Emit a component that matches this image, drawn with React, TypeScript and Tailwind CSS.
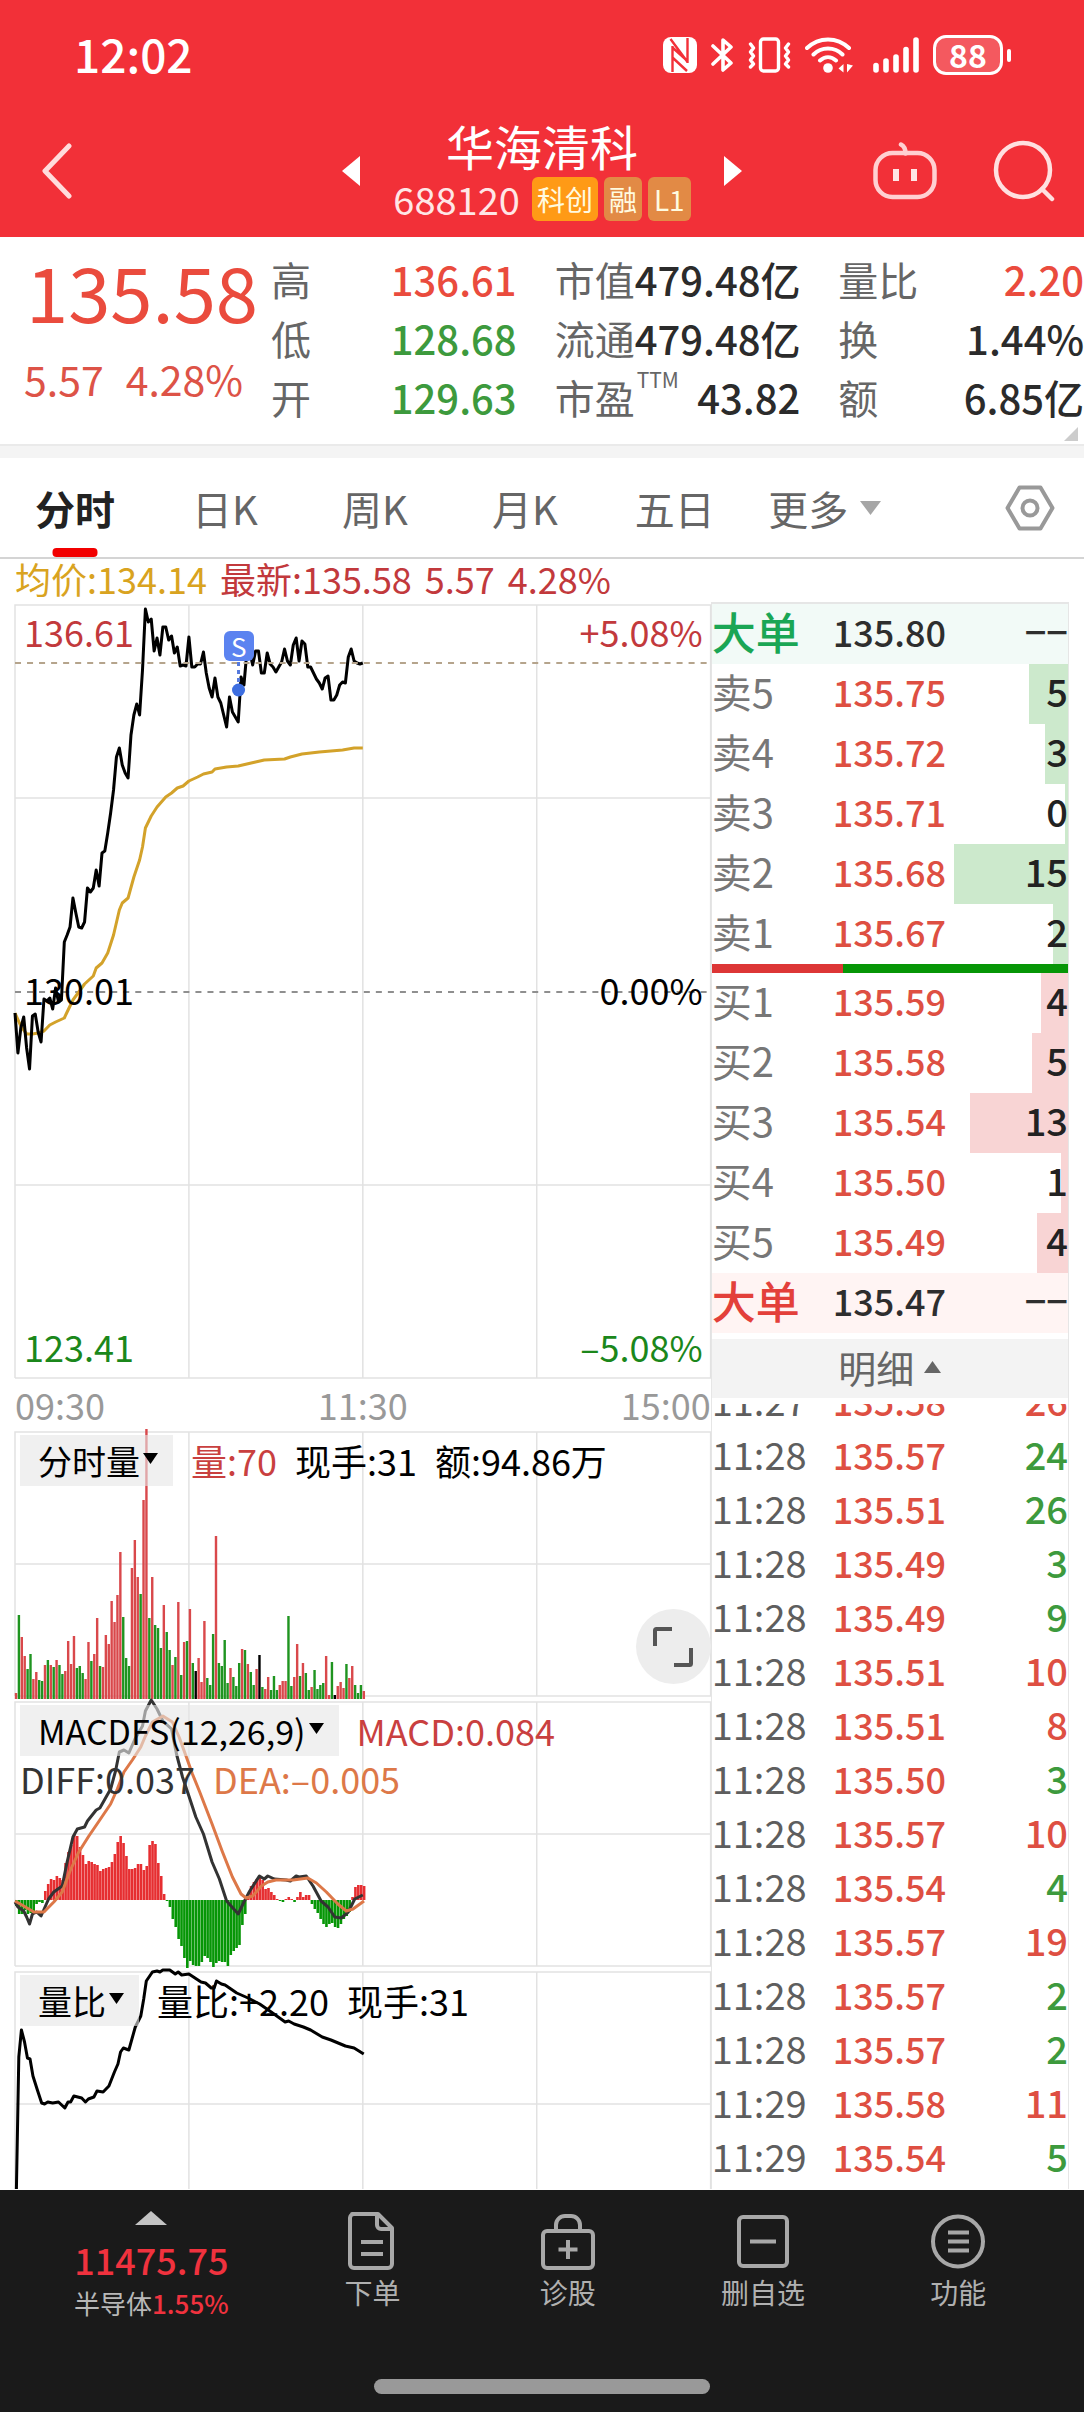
import React from 'react';

type Point = [number, number];

interface OrderRow {
  label: string;
  price: string;
  volume: string;
  depth: number;
}

interface Tick {
  time: string;
  price: string;
  volume: number;
  side: 'buy' | 'sell';
}

const CHART_WIDTH = 694;
const MINUTES = 240;
const STEP = CHART_WIDTH / MINUTES;

const priceSeries = [
  408, 448, 423, 412, 443, 464, 411, 409, 427, 437, 394, 396, 393, 404, 383, 397, 395, 337, 330, 322,
  293, 308, 322, 323, 317, 283, 287, 283, 265, 281, 248, 246, 228, 208, 185, 152, 143, 160, 168, 173,
  130, 110, 99, 110, 65, 4, 17, 14, 46, 33, 50, 22, 22, 35, 31, 48, 42, 61, 60, 61,
  32, 62, 62, 59, 59, 47, 68, 83, 92, 73, 92, 98, 110, 122, 92, 107, 112, 117, 72, 80,
  47, 47, 60, 46, 46, 68, 68, 48, 59, 62, 67, 62, 57, 44, 56, 60, 40, 33, 56, 36,
  39, 62, 62, 68, 74, 78, 84, 73, 71, 95, 95, 90, 80, 77, 78, 52, 44, 56, 58, 59, 58,
];

const averageSeries: Point[] = [
  [0, 408], [2, 421], [4, 429], [6, 429], [8, 428], [10, 426], [12, 420], [14, 417], [17, 413], [18, 407],
  [20, 395], [22, 387], [24, 379], [27, 371], [28, 363], [30, 358], [32, 348], [34, 330], [36, 305], [37, 298],
  [39, 293], [41, 272], [43, 255], [44, 242], [45, 223], [47, 211], [49, 202], [52, 192], [54, 188], [56, 183],
  [58, 181], [60, 176], [63, 172], [65, 169], [68, 167], [69, 164], [73, 162], [77, 161], [80, 159], [83, 157],
  [86, 155], [93, 154], [95, 152], [99, 149], [105, 147], [113, 145], [117, 143], [120, 143],
];

const volumeSeries =
  'r6 g84 r62 r43 g30 g45 r20 r27 g19 g18 r34 g39 r34 g32 r39 g34 g25 r28 r58 r35 r63 g31 g33 g26 r20 r57 g38 r45 r81 g33 ' +
  'r32 r64 r55 r98 r77 r104 r147 g82 g41 g33 r131 r159 r122 g105 r199 r270 g81 r122 g74 g71 g51 r94 g67 g49 r34 g42 r97 g24 r57 g58 ' +
  'r90 g36 k28 r41 r17 r78 g21 g14 g65 r163 g36 g33 g59 g16 r31 g22 g13 g36 r50 g49 r35 g27 g14 r30 k44 g12 r10 r22 g9 g23 ' +
  'g9 r14 r18 r18 g83 g13 r22 r55 g23 r36 g26 g9 r12 g29 g10 g14 g16 r43 r4 g37 k4 r13 r17 r11 g35 r21 r33 g14 g6 g14 r8';

const macdBars = [
  -6, -14, -14, -10, -14, -13, -11, -4, -2, -3, 9, 16, 21, 20, 24, 22, 20, 37, 48, 55,
  66, 64, 53, 45, 36, 39, 38, 36, 35, 29, 31, 32, 33, 38, 46, 58, 64, 57, 44, 31,
  31, 32, 36, 36, 30, 34, 55, 59, 56, 37, 24, 6, -1, -7, -19, -27, -39, -46, -58, -68,
  -61, -65, -66, -66, -62, -56, -58, -62, -67, -63, -61, -62, -62, -66, -55, -51, -48, -45, -25, -14,
  6, 14, 18, 21, 22, 20, 11, 12, 8, 5, 1, -1, -2, 1, 3, 1, -2, 3, 8, 3,
  5, 5, -4, -9, -13, -19, -24, -27, -24, -23, -27, -28, -24, -19, -16, -12, 3, 13, 15, 15, 14,
];

const diffSeries: Point[] = [
  [0, 200], [1, 205], [3, 209], [4, 215], [5, 222], [6, 212], [7.5, 210], [9, 214], [11.6, 197], [13.4, 190],
  [16.3, 184], [18, 160], [20, 135], [21.5, 127], [24, 125], [25, 119], [28, 108], [29.3, 106], [33, 87], [34.7, 69],
  [36, 50], [37.6, 48], [39.3, 51], [41.4, 37], [44, 24], [45, 9], [47, -2], [49, 7], [51, 19], [54, 27],
  [55.7, 52], [57.8, 75], [60, 94], [62.4, 115], [65, 132], [68, 160], [70.5, 177], [73, 199], [77, 212], [79, 200],
  [81, 189], [84.3, 174], [86, 177], [87.2, 174], [89.5, 177], [93.5, 178], [95, 179], [97, 174], [98, 175], [100.5, 174],
  [102.8, 184], [105.6, 199], [108, 205], [110.3, 215], [112.6, 216], [115, 210], [117.2, 197], [120, 193],
];

const deaSeries: Point[] = [
  [0, 199], [3, 204], [6.5, 210], [10, 210], [13.4, 200], [16.3, 190], [19, 169], [22, 150], [25.5, 134], [29, 119],
  [33, 102], [35.3, 87], [37.6, 70], [40.5, 58], [43.4, 45], [45, 34], [47.4, 20], [51, 14], [54.3, 20], [56.6, 35],
  [59, 54], [61.2, 72], [63.6, 89], [68, 122], [71.6, 150], [75, 175], [78, 192], [79.7, 196], [82, 194], [85, 184],
  [87.2, 180], [90, 178], [96, 178], [101, 176], [104, 181], [107.4, 190], [111.4, 202], [114.3, 209], [116.6, 207], [120.4, 199],
];

const ratioSeries: Point[] = [
  [0.5, 217], [1.3, 85], [2.2, 58], [3.3, 70], [4.3, 86], [5.2, 87], [6.2, 104], [7.6, 117], [9.2, 131], [10.2, 132],
  [11.3, 130], [13, 131], [15, 130], [17.2, 136], [18.3, 130], [19.2, 130], [20.3, 124], [23, 126], [24.3, 130], [25.3, 127],
  [27.2, 125], [28.3, 119], [30.4, 120], [32.4, 114], [34.3, 100], [35.5, 92], [36.4, 80], [37.4, 76], [39.3, 78], [41.5, 55],
  [43.4, 44], [44.4, 27], [45.3, 9], [47.4, 0], [49, -1], [50, 0], [51, -2], [53.4, -2], [55.3, 2], [56.3, 0],
  [57.5, 3], [60, 2], [64.2, 10], [65.7, 11], [67.7, 16], [68.7, 16], [69.5, 9], [71.2, 12], [72.5, 13], [76.5, 21],
  [80.4, 26], [84.4, 32], [88.4, 40], [93.2, 50], [94.4, 49], [96.3, 52], [99.5, 55], [102, 58], [106, 65], [109, 68],
  [114, 74], [117, 76], [120.3, 82],
];

const asks: OrderRow[] = [
  { label: '卖5', price: '135.75', volume: '5', depth: 11 },
  { label: '卖4', price: '135.72', volume: '3', depth: 6.5 },
  { label: '卖3', price: '135.71', volume: '0', depth: 0.9 },
  { label: '卖2', price: '135.68', volume: '15', depth: 32.1 },
  { label: '卖1', price: '135.67', volume: '2', depth: 4.2 },
];

const bids: OrderRow[] = [
  { label: '买1', price: '135.59', volume: '4', depth: 7.6 },
  { label: '买2', price: '135.58', volume: '5', depth: 10.1 },
  { label: '买3', price: '135.54', volume: '13', depth: 27.4 },
  { label: '买4', price: '135.50', volume: '1', depth: 2 },
  { label: '买5', price: '135.49', volume: '4', depth: 8.7 },
];

const ticks: Tick[] = [
  { time: '11:27', price: '135.58', volume: 26, side: 'buy' },
  { time: '11:28', price: '135.57', volume: 24, side: 'sell' },
  { time: '11:28', price: '135.51', volume: 26, side: 'sell' },
  { time: '11:28', price: '135.49', volume: 3, side: 'sell' },
  { time: '11:28', price: '135.49', volume: 9, side: 'sell' },
  { time: '11:28', price: '135.51', volume: 10, side: 'buy' },
  { time: '11:28', price: '135.51', volume: 8, side: 'buy' },
  { time: '11:28', price: '135.50', volume: 3, side: 'sell' },
  { time: '11:28', price: '135.57', volume: 10, side: 'buy' },
  { time: '11:28', price: '135.54', volume: 4, side: 'sell' },
  { time: '11:28', price: '135.57', volume: 19, side: 'buy' },
  { time: '11:28', price: '135.57', volume: 2, side: 'sell' },
  { time: '11:28', price: '135.57', volume: 2, side: 'sell' },
  { time: '11:29', price: '135.58', volume: 11, side: 'buy' },
  { time: '11:29', price: '135.54', volume: 5, side: 'sell' },
];

const toPoints = (series: Point[]) => series.map(([m, y]) => `${(m * STEP).toFixed(1)},${y}`).join(' ');

const barColors = { r: '#d9484b', g: '#1f9420', k: '#000000' };

// Status bar

const StatusBar: React.FC = () => (
  <div className="flex h-[110px] items-center justify-between pl-[74px] pr-[73px]">
    <span className="pb-[4px] text-[46px] leading-[46px] font-medium">12:02</span>
    <div className="flex items-center gap-[14px]">
      <svg className="h-[36px] w-[34px]" viewBox="0 0 34 36" fill="none">
        <rect width="34" height="36" rx="8" fill="#fff" />
        <path d="M9.500 35V9M24.500 1v25M7.500 2l17 23M10 11l14.500 13M10 21l14 13" stroke="#f23038" strokeWidth="2.400" />
      </svg>
      <svg className="h-[36px] w-[23px]" viewBox="0 0 23 36" fill="none" stroke="#fff" strokeWidth="3.6" strokeLinejoin="round" strokeLinecap="round">
        <path d="M2 9l18 17-8 7V3l8 7L2 27" />
      </svg>
      <svg className="h-[36px] w-[43px]" viewBox="0 0 43 36" fill="none" stroke="#fff" strokeWidth="3.4" strokeLinejoin="round" strokeLinecap="round">
        <rect x="12.5" y="2" width="18" height="32" rx="3" />
        <path d="M2.500 7l3 4-3 4 3 4-3 4 3 4-3 3M40.500 7l-3 4 3 4-3 4 3 4-3 4 3 3" />
      </svg>
      <svg className="h-[36px] w-[48px]" viewBox="0 0 48 36" fill="none" stroke="#fff" strokeWidth="4" strokeLinecap="round">
        <path d="M2 11c12-11.500 30-11.500 42 0M8.500 17.500c8-8 21-8 29 0M15 23.500c5-4.500 11-4.500 16 0" />
        <circle cx="23" cy="31" r="4.800" fill="#fff" stroke="none" />
        <path d="M38.500 27v8.500l-5-4zM42 27v8.500l6-7z" fill="#fff" stroke="none" />
      </svg>
      <svg className="ml-[6px] h-[36px] w-[46px]" viewBox="0 0 46 36" stroke="#fff" strokeWidth="5.600" strokeLinecap="round">
        <path d="M3 28.500v4.500M13 24v9M23 20v13M33 12.500V33M43 3v30" />
      </svg>
      <div className="flex items-center gap-[4px]">
        <div className="flex h-[40px] w-[70px] items-center justify-center rounded-[13px] border-[3px] border-white bg-white/20">
          <span className="pb-[2px] text-[32px] leading-[32px] font-bold">88</span>
        </div>
        <span className="h-[13px] w-[4px] rounded-sm bg-white" />
      </div>
    </div>
  </div>
);

const TitleBar: React.FC = () => (
  <div className="grid grid-cols-[1fr_auto_1fr] items-center pt-[10px] pb-[16px]">
    <button aria-label="返回" className="ml-[42px] justify-self-start">
      <svg className="h-[56px] w-[30px]" viewBox="0 0 30 56" fill="none" stroke="#ffdcdc" strokeWidth="5" strokeLinecap="round" strokeLinejoin="round">
        <path d="M27 3L3 28l24 25" />
      </svg>
    </button>
    <div className="flex w-[400px] items-center justify-between">
      <button aria-label="上一只">
        <svg className="h-[30px] w-[18px]" viewBox="0 0 18 30" fill="#fff">
          <path d="M18 0v30L0 15z" />
        </svg>
      </button>
      <div className="flex flex-col items-center gap-[7px]">
        <h1 className="text-[48px] leading-[50px]">华海清科</h1>
        <div className="flex h-[44px] items-center gap-[6px] text-[28px] text-[#fffbe0]">
          <span className="mr-[6px] text-[38px] leading-[42px] text-[#ffe6e6]">688120</span>
          <span className="rounded-md bg-[#ff9a16] px-[5px] leading-[44px]">科创</span>
          <span className="rounded-md bg-[#e28a45] px-[5px] leading-[44px]">融</span>
          <span className="rounded-md bg-[#e28a45] px-[6px] leading-[44px]">L1</span>
        </div>
      </div>
      <button aria-label="下一只">
        <svg className="h-[30px] w-[18px]" viewBox="0 0 18 30" fill="#fff">
          <path d="M0 0v30l18-15z" />
        </svg>
      </button>
    </div>
    <div className="mr-[29px] flex items-center gap-[56px] justify-self-end">
      <button aria-label="智能助手">
        <svg className="h-[58px] w-[64px]" viewBox="0 0 64 58" fill="none" stroke="#ffd0d2" strokeWidth="4.500" strokeLinecap="round">
          <rect x="2.500" y="11" width="59" height="44" rx="17" />
          <path d="M28 2.500c3 1.500 4.500 4.500 4.500 9" />
          <path d="M23 27v12M41 27v12" strokeWidth="6" strokeLinecap="butt" stroke="#ffe6e6" />
        </svg>
      </button>
      <button aria-label="搜索">
        <svg className="h-[62px] w-[62px]" viewBox="0 0 62 62" fill="none" stroke="#ffe0e0" strokeWidth="4.500" strokeLinecap="round">
          <circle cx="30" cy="30" r="27" />
          <path d="M49 49l10 10" />
        </svg>
      </button>
    </div>
  </div>
);

const QuoteItem: React.FC<{ label: string; sup?: string; value: string; color?: string }> = ({ label, sup, value, color = 'text-[#2b2b2b]' }) => (
  <div className="flex h-[59px] items-center justify-between whitespace-nowrap">
    <dt className="text-[40px] leading-[59px] text-[#666666]">
      {label}
      {sup && <sup className="-top-[26px] ml-[2px] text-[21px] leading-none">{sup}</sup>}
    </dt>
    <dd className={`text-[40px] leading-[59px] font-medium ${color}`}>{value}</dd>
  </div>
);

const QuotePanel: React.FC = () => (
  <section className="relative flex pt-[13px] pb-[17px]">
    <div className="w-[25%] whitespace-nowrap">
      <p className="pl-[26px] text-[76px] leading-[80px] text-[#ea4b3d]">135.58</p>
      <p className="flex gap-[22px] pt-[24px] pl-[24px] text-[41px] leading-[48px] text-[#dd5347]">
        <span>5.57</span>
        <span>4.28%</span>
      </p>
    </div>
    <dl className="grid flex-1 grid-flow-col grid-cols-3 grid-rows-3 gap-x-[38px]">
      <QuoteItem label="高" value="136.61" color="text-[#ea4b3d]" />
      <QuoteItem label="低" value="128.68" color="text-[#3d9a3d]" />
      <QuoteItem label="开" value="129.63" color="text-[#3d9a3d]" />
      <QuoteItem label="市值" value="479.48亿" />
      <QuoteItem label="流通" value="479.48亿" />
      <QuoteItem label="市盈" sup="TTM" value="43.82" />
      <QuoteItem label="量比" value="2.20" color="text-[#ea4b3d]" />
      <QuoteItem label="换" value="1.44%" />
      <QuoteItem label="额" value="6.85亿" />
    </dl>
    <svg className="absolute right-[6px] bottom-[3px] h-[14px] w-[14px]" viewBox="0 0 14 14" fill="#cccccc">
      <path d="M14 0v14H0z" />
    </svg>
  </section>
);

const PeriodTabs: React.FC = () => (
  <nav className="flex h-[101px] items-center border-b-2 border-[#d4d4d4] text-[40px] leading-[56px] text-[#666666]">
    <div className="grid h-full w-[83%] grid-cols-6">
      <button className="relative font-bold text-[#222222]">
        分时
        <span className="absolute bottom-0 left-1/2 h-[9px] w-[45px] -translate-x-1/2 rounded-sm bg-[#f20000]" />
      </button>
      <button>日K</button>
      <button>周K</button>
      <button>月K</button>
      <button>五日</button>
      <button className="flex items-center justify-center gap-[12px]">
        更多
        <svg className="h-[14px] w-[21px]" viewBox="0 0 21 14" fill="#a6a6a6">
          <path d="M0 0h21L10.500 14z" />
        </svg>
      </button>
    </div>
    <button aria-label="设置" className="mr-[29px] ml-auto">
      <svg className="h-[46px] w-[50px]" viewBox="0 0 50 46" fill="none" stroke="#999999" strokeWidth="4" strokeLinejoin="round">
        <path d="M14.500 2.500h21L47.500 23l-12 20.500h-21L2.500 23z" />
        <circle cx="25" cy="23" r="7.500" />
      </svg>
    </button>
  </nav>
);

// Charts

const Grid: React.FC<{ height: number; rows: number[]; bottom?: boolean }> = ({ height, rows, bottom = true }) => (
  <g stroke="#e2e2e2" strokeWidth="1.500">
    <path d={`M0 ${height}V0H${CHART_WIDTH}V${height}${bottom ? 'H0' : ''}`} fill="none" />
    {[0.25, 0.5, 0.75].map((ratio) => (
      <path key={ratio} d={`M${CHART_WIDTH * ratio} 0V${height}`} />
    ))}
    {rows.map((y) => (
      <path key={y} d={`M0 ${y}H${CHART_WIDTH}`} />
    ))}
  </g>
);

const Chart: React.FC<{ height: number; className: string; children: React.ReactNode }> = ({ height, className, children }) => (
  <svg className={`block w-full overflow-visible ${className}`} viewBox={`0 0 ${CHART_WIDTH} ${height}`} preserveAspectRatio="none" fill="none">
    {children}
  </svg>
);

const IndicatorButton: React.FC<{ name: string }> = ({ name }) => (
  <button className="flex h-[51px] items-center gap-[3px] bg-[#e6e6e6]/60 pr-[15px] pl-[18px] text-[34px] leading-[51px] text-black">
    {name}
    <svg className="mb-[4px] h-[11px] w-[15px]" viewBox="0 0 15 11" fill="#000">
      <path d="M0 0h15L7.500 11z" />
    </svg>
  </button>
);

const PriceChart: React.FC = () => {
  const price = toPoints(priceSeries.map((y, m) => [m, y] as Point));
  return (
    <div className="relative text-[36px] leading-[44px]">
      <Chart height={773} className="h-[773px]">
        <Grid height={773} rows={[193, 580]} />
        <path d={`M0 387H${CHART_WIDTH}`} stroke="#8f8f8f" strokeWidth="2" strokeDasharray="6 6" />
        <polyline points={toPoints(averageSeries)} stroke="#d3a22a" strokeWidth="3" strokeLinejoin="round" />
        <polyline points={price} stroke="#000" strokeWidth="3" strokeLinejoin="round" />
        <path d={`M0 58H${CHART_WIDTH}`} stroke="#b5a48c" strokeWidth="2" strokeDasharray="6 6" />
        <path d="M223 57v26" stroke="#5479dd" strokeWidth="3" strokeDasharray="4 4" />
        <circle cx="223" cy="85" r="6.500" fill="#3d6ee0" />
      </Chart>
      <span className="absolute top-[26px] left-[30%] flex h-[30px] w-[30px] items-center justify-center rounded-md bg-[#5b83f0] text-[26px] leading-[30px] text-white">S</span>
      <span className="absolute top-[4px] left-[9px] text-[#c2393c]">136.61</span>
      <span className="absolute top-[4px] right-[8px] text-[#c2393c]">+5.08%</span>
      <span className="absolute top-[362px] left-[9px] text-black">130.01</span>
      <span className="absolute top-[362px] right-[8px] text-black">0.00%</span>
      <span className="absolute bottom-[10px] left-[9px] text-[#1b871b]">123.41</span>
      <span className="absolute right-[8px] bottom-[10px] text-[#1b871b]">–5.08%</span>
    </div>
  );
};

const VolumeChart: React.FC = () => (
  <div className="relative mb-[6px]">
    <Chart height={264} className="h-[264px]">
      <Grid height={264} rows={[132]} />
      {volumeSeries.split(' ').map((bar, m) => {
        const height = Number(bar.slice(1));
        return (
          <rect key={m} x={m * STEP - 0.2} y={267 - height} width="2.400" height={height} fill={barColors[bar[0] as keyof typeof barColors]} />
        );
      })}
    </Chart>
    <div className="absolute top-[3px] left-[5px] flex items-center text-[36px] leading-[51px] whitespace-nowrap text-black">
      <IndicatorButton name="分时量" />
      <span className="ml-[18px] text-[#c9403f]">量:70</span>
      <span className="ml-[18px]">现手:31</span>
      <span className="ml-[18px]">额:94.86万</span>
    </div>
    <button aria-label="全屏" className="absolute right-0 bottom-[12px] flex h-[75px] w-[75px] items-center justify-center rounded-full bg-[#ededed]">
      <svg className="h-[40px] w-[40px]" viewBox="0 0 40 40" fill="none" stroke="#555555" strokeWidth="4">
        <path d="M2 19V3.500a1.500 1.500 0 0 1 1.500-1.500H19M38 21v15.500a1.500 1.500 0 0 1-1.500 1.500H21" />
      </svg>
    </button>
  </div>
);

const MacdChart: React.FC = () => (
  <div className="relative mb-[6px]">
    <Chart height={264} className="h-[264px]">
      <Grid height={264} rows={[132]} />
      {macdBars.map((value, m) => (
        <rect
          key={m}
          x={m * STEP}
          y={value > 0 ? 198 - value : 198}
          width="2.600"
          height={Math.abs(value)}
          fill={value > 0 ? '#e62e31' : '#069606'}
        />
      ))}
      <polyline points={toPoints(diffSeries)} stroke="#333333" strokeWidth="3" strokeLinejoin="round" />
      <polyline points={toPoints(deaSeries)} stroke="#dd7848" strokeWidth="3" strokeLinejoin="round" />
    </Chart>
    <div className="absolute top-[3px] left-[5px] text-[36px] leading-[51px] whitespace-nowrap">
      <div className="flex items-center">
        <IndicatorButton name="MACDFS(12,26,9)" />
        <span className="ml-[18px] text-[#c9403f]">MACD:0.084</span>
      </div>
      <div className="flex gap-[18px] leading-[44px]">
        <span className="text-[#333333]">DIFF:0.037</span>
        <span className="text-[#dd7848]">DEA:–0.005</span>
      </div>
    </div>
  </div>
);

const RatioChart: React.FC = () => (
  <div className="relative">
    <Chart height={217} className="h-[217px]">
      <Grid height={217} rows={[132]} bottom={false} />
      <polyline points={toPoints(ratioSeries)} stroke="#000" strokeWidth="3" strokeLinejoin="round" />
    </Chart>
    <div className="absolute top-[3px] left-[5px] flex items-center text-[36px] leading-[51px] whitespace-nowrap text-black">
      <IndicatorButton name="量比" />
      <span className="ml-[18px]">量比:+2.20</span>
      <span className="ml-[18px]">现手:31</span>
    </div>
  </div>
);

// Order book

const BookTable: React.FC<{ className?: string; children: React.ReactNode }> = ({ className = '', children }) => (
  <table className={`w-full table-fixed text-[38px] leading-[48px] font-medium whitespace-nowrap [&_td]:pb-[6px] [&_th]:pb-[6px] ${className}`}>
    <colgroup>
      <col className="w-[34%]" />
      <col className="w-[36%]" />
      <col />
    </colgroup>
    <tbody>{children}</tbody>
  </table>
);

const OrderRows: React.FC<{ rows: OrderRow[]; barClass: string }> = ({ rows, barClass }) => (
  <>
    {rows.map((row) => (
      <tr key={row.label} className="relative h-[60px]">
        <th className="text-left text-[40px] font-normal text-[#777777]">{row.label}</th>
        <td className="text-[36px] text-[#de4f42]">{row.price}</td>
        <td className="text-right text-[#222222]">
          <span className={`absolute inset-y-0 right-0 ${barClass}`} style={{ width: `${row.depth}%` }} />
          <span className="relative">{row.volume}</span>
        </td>
      </tr>
    ))}
  </>
);

const OrderBook: React.FC = () => (
  <aside className="w-[34%] border-x border-t-2 border-[#e6e6e6]">
    <BookTable>
      <tr className="h-[60px] bg-[#f2faf7] text-[#2e2e2e]">
        <th className="text-left text-[44px] font-medium text-[#1aa655]">大单</th>
        <td className="text-[36px]">135.80</td>
        <td className="text-right">−−</td>
      </tr>
      <OrderRows rows={asks} barClass="bg-[#cce9cc]" />
    </BookTable>
    <div className="flex h-[9px]">
      <span className="w-[37%] bg-[#dd3636]" />
      <span className="flex-1 bg-[#069606]" />
    </div>
    <BookTable>
      <OrderRows rows={bids} barClass="bg-[#f8d4d4]" />
      <tr className="h-[60px] bg-[#fff4f3] text-[#2e2e2e]">
        <th className="text-left text-[44px] font-medium text-[#e3403a]">大单</th>
        <td className="text-[36px]">135.47</td>
        <td className="text-right">−−</td>
      </tr>
    </BookTable>
    <button className="my-[6px] flex h-[59px] w-full items-center justify-center gap-[10px] bg-[#f3f3f3] pb-[4px] text-[38px] leading-[55px] text-[#666666]">
      明细
      <svg className="h-[12px] w-[17px]" viewBox="0 0 17 12" fill="#666666">
        <path d="M0 12h17L8.500 0z" />
      </svg>
    </button>
    <div className="overflow-hidden">
      <BookTable className="-mt-[28px]">
        {ticks.map((tick, index) => (
          <tr key={index} className="h-[54px]">
            <td className="font-normal text-[#5e5e5e]">{tick.time}</td>
            <td className="text-[36px] text-[#de4f42]">{tick.price}</td>
            <td className={`text-right ${tick.side === 'buy' ? 'text-[#de4f42]' : 'text-[#3d9a3d]'}`}>{tick.volume}</td>
          </tr>
        ))}
      </BookTable>
    </div>
  </aside>
);

// Bottom bar

const NavItem: React.FC<{ label: string; children: React.ReactNode }> = ({ label, children }) => (
  <button className="flex flex-1 flex-col items-center text-[28px] leading-[38px] text-[#b0b0b0]">
    <svg className="mb-[2px] h-[60px] w-[60px]" viewBox="0 0 60 60" fill="none" stroke="#a8a8a8" strokeWidth="4" strokeLinejoin="round">
      {children}
    </svg>
    {label}
  </button>
);

const BottomBar: React.FC = () => (
  <footer className="bg-[#1a1a1a] px-[28px] pt-[21px] pb-[18px]">
    <div className="flex h-[168px] items-start">
      <button className="flex w-[24%] flex-col items-center whitespace-nowrap">
        <svg className="h-[14px] w-[32px]" viewBox="0 0 32 14" fill="#c4c4c4">
          <path d="M16 0l16 14H0z" />
        </svg>
        <span className="mt-[12px] text-[36px] leading-[44px] font-medium text-[#f0323e]">11475.75</span>
        <span className="text-[26px] leading-[44px] text-[#b8b8b8]">
          半导体<span className="font-medium text-[#f0323e]">1.55%</span>
        </span>
      </button>
      <NavItem label="下单">
        <path d="M10 3h26l14 14v36a4 4 0 0 1-4 4H12a4 4 0 0 1-4-4V7a4 4 0 0 1 4-4z" />
        <path d="M35 4v10a4 4 0 0 0 4 4h10M19 31h22M19 43h22" />
      </NavItem>
      <NavItem label="诊股">
        <rect x="5" y="20" width="50" height="37" rx="4" />
        <path d="M18 20v-6a9 9 0 0 1 9-9h6a9 9 0 0 1 9 9v6M30 29v19M20.500 38.500h19" />
      </NavItem>
      <NavItem label="删自选">
        <rect x="6" y="6" width="48" height="49" rx="4" />
        <path d="M17 30.500h26" />
      </NavItem>
      <NavItem label="功能">
        <circle cx="30" cy="30.500" r="25" />
        <path d="M20 21.500h21M20 30.500h21M20 39.500h21" />
      </NavItem>
    </div>
    <div className="mx-auto h-[15px] w-[336px] rounded-full bg-[#999999]" />
  </footer>
);

export default function App() {
  return (
    <div className="flex min-h-screen flex-col bg-white font-['Noto_Sans_CJK_SC',sans-serif]">
      <header className="bg-[#f23038] text-white">
        <StatusBar />
        <TitleBar />
      </header>
      <QuotePanel />
      <div className="h-[14px] border-t-2 border-[#eaeaea] bg-[#f4f4f4]" />
      <PeriodTabs />
      <main className="flex-1 px-[15px]">
        <p className="flex h-[43px] items-center gap-[13px] pb-[4px] text-[36px] leading-[39px] whitespace-nowrap text-[#c2393c]">
          <span className="text-[#d9a320]">均价:134.14</span>
          <span>最新:135.58</span>
          <span>5.57</span>
          <span>4.28%</span>
        </p>
        <div className="flex">
          <div className="flex-1 pt-[3px]">
            <PriceChart />
            <div className="flex h-[54px] items-center justify-between pb-[2px] text-[36px] leading-[52px] text-[#999999]">
              <span>09:30</span>
              <span>11:30</span>
              <span>15:00</span>
            </div>
            <VolumeChart />
            <MacdChart />
            <RatioChart />
          </div>
          <OrderBook />
        </div>
      </main>
      <BottomBar />
    </div>
  );
}
